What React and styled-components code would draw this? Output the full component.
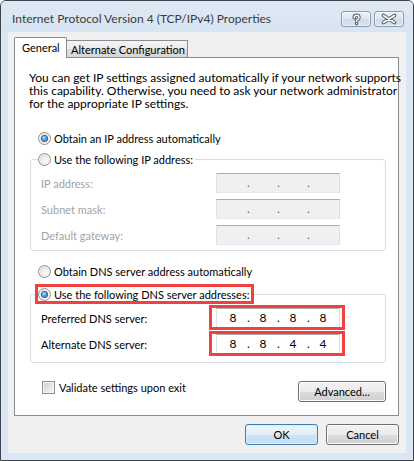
import styled, { createGlobalStyle, css } from "styled-components";

const GlobalStyle = createGlobalStyle`
  html, body {
    margin: 0;
    padding: 0;
    background: #ffffff;
  }
  body {
    font-family: "Segoe UI", Lato, "Open Sans", sans-serif;
    font-size: 11px;
    color: #000;
  }
  * {
    box-sizing: border-box;
  }
`;

const Window = styled.div`
  width: 414px;
  height: 461px;
  display: flex;
  flex-direction: column;
  padding: 0 7px 7px;
  background: #dae6f3;
  border: 1px solid #3d434b;
  border-radius: 6px 6px 0 0;
`;

const TitleBar = styled.div`
  height: 31px;
  flex-shrink: 0;
  display: flex;
  align-items: center;
  margin: 0 -7px;
  padding: 5px 9px 0 11px;
  background: linear-gradient(#dfe9f5, #d7e4f2);
  border-radius: 5px 5px 0 0;
`;

const Title = styled.div`
  flex: 1;
  font-size: 12px;
  line-height: 16px;
  color: #3c3c3c;
  white-space: nowrap;
`;

const CaptionButtons = styled.div`
  display: flex;
  gap: 3px;
`;

const CaptionButton = styled.div`
  width: 30px;
  height: 16px;
  display: flex;
  align-items: center;
  justify-content: center;
  border: 1px solid #8d9aa9;
  border-radius: 3px;
  background: linear-gradient(#e9f0f8, #dbe5f0 50%, #d0dcea 51%, #d6e1ed);
  box-shadow: inset 0 0 0 1px rgba(255, 255, 255, 0.55);
`;

const Content = styled.div`
  flex: 1;
  display: flex;
  flex-direction: column;
  padding-top: 5px;
  background: #f0f0f0;
`;

const TabStrip = styled.div`
  display: flex;
  align-items: flex-end;
  height: 21px;
  padding-left: 6px;
  position: relative;
  z-index: 1;
`;

const Tab = styled.div`
  display: flex;
  align-items: center;
  white-space: nowrap;
  border: 1px solid #898c95;
  border-bottom: none;
  ${(p) =>
    p.$active
      ? css`
          width: 53px;
          height: 21px;
          padding: 0 0 1px 7px;
          background: #ffffff;
          border-radius: 2px 2px 0 0;
        `
      : css`
          width: 121px;
          height: 17px;
          margin-bottom: 1px;
          padding: 0 0 0 4px;
          border-left: none;
          background: linear-gradient(#f3f3f3, #ebebeb 50%, #dddddd 51%, #d7d7d7);
        `}
`;

const Panel = styled.div`
  height: 359px;
  margin: -1px 7px 0 6px;
  padding: 13px 12px 0 14px;
  display: flex;
  flex-direction: column;
  background: #ffffff;
  border: 1px solid #898c95;
`;

const Intro = styled.p`
  margin: 0;
  font-size: 12px;
  line-height: 13px;
  white-space: nowrap;
`;

const OptionRow = styled.div`
  display: flex;
  align-items: center;
  gap: 3px;
  height: 14px;
  margin: ${(p) => p.$top}px 0 0 9px;
  white-space: nowrap;
`;

const Radio = styled.span`
  width: 13px;
  height: 13px;
  flex-shrink: 0;
  border-radius: 50%;
  border: 1px solid #8c8f92;
  background: radial-gradient(circle at 60% 65%, #fdfdfd 0%, #eaeaea 45%, #d2d2d2 100%);
  box-shadow: inset 0 0 0 1px #f4f4f4;
  display: flex;
  align-items: center;
  justify-content: center;

  ${(p) =>
    p.$checked &&
    css`
      &::after {
        content: "";
        width: 5px;
        height: 5px;
        border-radius: 50%;
        background: radial-gradient(circle at 40% 35%, #b9e6ff 0%, #3a8fd0 55%, #1c4f84 100%);
        box-shadow: 0 0 0 1px #2d5f8d;
      }
    `}
`;

const Group = styled.fieldset`
  margin: ${(p) => p.$top}px 0 0 1px;
  padding: 7px 0 ${(p) => p.$bottom}px 7px;
  border: 1px solid #d5dfe5;
  border-radius: 3px;
  min-width: 0;
`;

const Legend = styled.legend`
  display: flex;
  align-items: center;
  gap: 3px;
  height: 14px;
  padding: 0 2px 0 0;
  white-space: nowrap;
  ${(p) =>
    p.$marked &&
    css`
      outline: 3px solid #f0403f;
      outline-offset: 0;
    `}
`;

const FieldList = styled.div`
  display: flex;
  flex-direction: column;
  gap: 6px;
`;

const FieldRow = styled.div`
  display: grid;
  grid-template-columns: 175px 124px;
  align-items: center;
  height: 20px;
  padding-left: 3px;
  color: ${(p) => (p.$disabled ? "#a3a3a3" : "#000")};
  white-space: nowrap;
`;

const AddressBox = styled.div`
  position: relative;
  width: 124px;
  height: 20px;
  display: flex;
  align-items: center;
  padding-left: 2px;
  border: 1px solid;
  border-color: #abadb3 #dbdfe6 #e3e9ef #e2e3ea;
  background: ${(p) => (p.$disabled ? "#f0f0f0" : "#ffffff")};
  color: #000;

  ${(p) =>
    p.$marked &&
    css`
      &::after {
        content: "";
        position: absolute;
        left: -8px;
        right: -6px;
        top: -4px;
        bottom: -3px;
        border: 3px solid #f0403f;
        pointer-events: none;
      }
    `}
`;

const Octet = styled.span`
  width: 28px;
  text-align: center;
  font-size: 12px;
  line-height: 16px;
`;

const Dot = styled.span`
  width: 2px;
  text-align: center;
  font-size: 12px;
  line-height: 16px;
  color: ${(p) => (p.$disabled ? "#5a6a7a" : "#000")};
`;

const Footer = styled.div`
  display: flex;
  justify-content: space-between;
  align-items: flex-start;
  margin-top: 18px;
`;

const CheckLabel = styled.label`
  display: flex;
  align-items: center;
  gap: 4px;
  height: 13px;
  margin-left: 13px;
  white-space: nowrap;
`;

const Checkbox = styled.span`
  width: 13px;
  height: 13px;
  flex-shrink: 0;
  border: 1px solid #8e8f8f;
  background: linear-gradient(135deg, #cdcdcd 0%, #e6e6e6 55%, #f7f7f7 100%);
  box-shadow: inset 0 0 0 1px #f5f5f5;
`;

const Button = styled.button`
  width: ${(p) => p.$width || 73}px;
  height: 21px;
  padding: 0 0 1px;
  margin: 0;
  font-family: inherit;
  font-size: 11px;
  color: #000;
  border-radius: 3px;
  border: 1px solid ${(p) => (p.$default ? "#3c7fb1" : "#707070")};
  background: ${(p) =>
    p.$default
      ? "linear-gradient(#eef6fc, #e1eef9 50%, #cde4f5 51%, #c4def3)"
      : "linear-gradient(#f2f2f2, #ebebeb 50%, #dddddd 51%, #cfcfcf)"};
  box-shadow: inset 0 0 0 1px ${(p) => (p.$default ? "#dbf0fc" : "#fbfbfb")};
`;

const ButtonRow = styled.div`
  display: flex;
  justify-content: flex-end;
  gap: 8px;
  margin-top: 8px;
  padding-right: 7px;
`;

function HelpGlyph() {
  const d = "M12.2 5.8 Q12.2 3.3 14.6 3.3 Q17 3.3 17 5.5 Q17 7.2 14.6 8.2 L14.6 9.6";
  return (
    <svg width="28" height="14" viewBox="0 0 28 14">
      <path d={d} fill="none" stroke="#56606c" strokeWidth="3.4" strokeLinecap="round" />
      <circle cx="14.6" cy="11.7" r="1.7" fill="#56606c" />
      <path d={d} fill="none" stroke="#ffffff" strokeWidth="1.4" strokeLinecap="round" />
      <circle cx="14.6" cy="11.7" r="0.6" fill="#ffffff" />
    </svg>
  );
}

function CloseGlyph() {
  const d = "M8.5 3.5 L19.5 10.5 M19.5 3.5 L8.5 10.5";
  return (
    <svg width="28" height="14" viewBox="0 0 28 14">
      <path d={d} stroke="#56606c" strokeWidth="3.8" strokeLinecap="round" />
      <path d={d} stroke="#ffffff" strokeWidth="1.6" strokeLinecap="round" />
    </svg>
  );
}

function Address({ values = ["", "", "", ""], disabled, marked }) {
  return (
    <AddressBox $disabled={disabled} $marked={marked}>
      {values.map((v, i) => (
        <span key={i} style={{ display: "contents" }}>
          <Octet>{v}</Octet>
          {i < 3 && <Dot $disabled={disabled}>.</Dot>}
        </span>
      ))}
    </AddressBox>
  );
}

export default function App() {
  const ipFields = ["IP address:", "Subnet mask:", "Default gateway:"];

  return (
    <>
      <GlobalStyle />
      <Window>
        <TitleBar>
          <Title>Internet Protocol Version 4 (TCP/IPv4) Properties</Title>
          <CaptionButtons>
            <CaptionButton>
              <HelpGlyph />
            </CaptionButton>
            <CaptionButton>
              <CloseGlyph />
            </CaptionButton>
          </CaptionButtons>
        </TitleBar>

        <Content>
          <TabStrip>
            <Tab $active>General</Tab>
            <Tab>Alternate Configuration</Tab>
          </TabStrip>

          <Panel>
            <Intro>
              You can get IP settings assigned automatically if your network supports
              <br />
              this capability. Otherwise, you need to ask your network administrator
              <br />
              for the appropriate IP settings.
            </Intro>

            <OptionRow $top={21}>
              <Radio $checked />
              Obtain an IP address automatically
            </OptionRow>

            <Group $top={7} $bottom={5}>
              <Legend>
                <Radio />
                Use the following IP address:
              </Legend>
              <FieldList>
                {ipFields.map((label) => (
                  <FieldRow key={label} $disabled>
                    {label}
                    <Address disabled />
                  </FieldRow>
                ))}
              </FieldList>
            </Group>

            <OptionRow $top={13}>
              <Radio />
              Obtain DNS server address automatically
            </OptionRow>

            <Group $top={9} $bottom={8}>
              <Legend $marked>
                <Radio $checked />
                Use the following DNS server addresses:
              </Legend>
              <FieldList>
                <FieldRow>
                  Preferred DNS server:
                  <Address values={["8", "8", "8", "8"]} marked />
                </FieldRow>
                <FieldRow>
                  Alternate DNS server:
                  <Address values={["8", "8", "4", "4"]} marked />
                </FieldRow>
              </FieldList>
            </Group>

            <Footer>
              <CheckLabel>
                <Checkbox />
                Validate settings upon exit
              </CheckLabel>
              <Button $width={88}>Advanced...</Button>
            </Footer>
          </Panel>

          <ButtonRow>
            <Button $default>OK</Button>
            <Button>Cancel</Button>
          </ButtonRow>
        </Content>
      </Window>
    </>
  );
}
